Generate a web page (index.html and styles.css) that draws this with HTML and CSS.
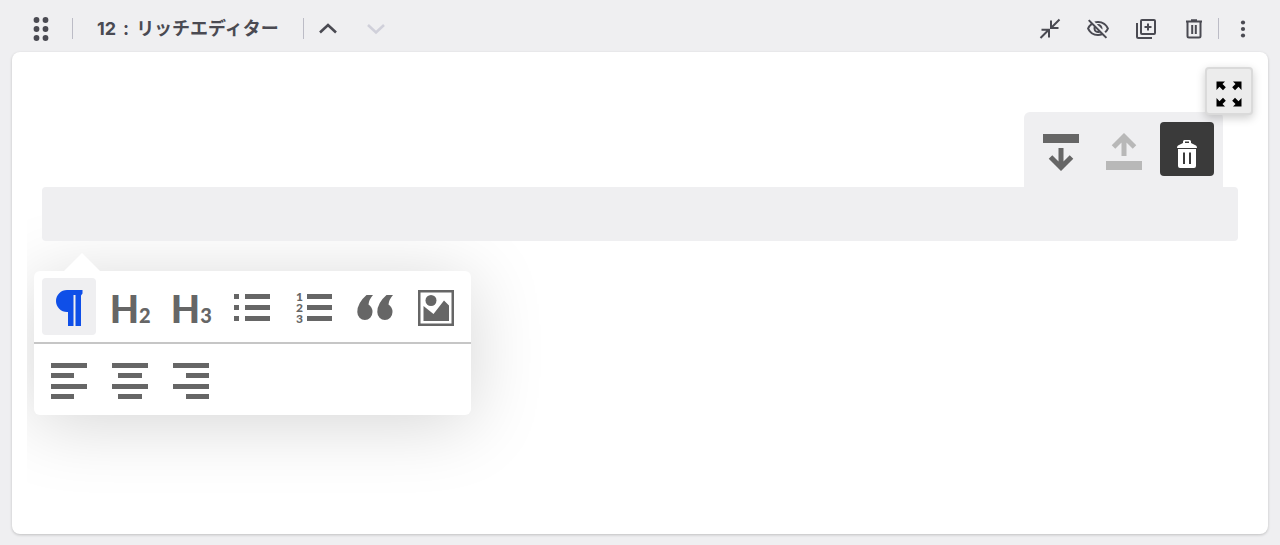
FILE: index.html
```html
<!DOCTYPE html>
<html lang="ja">
<head>
  <meta charset="UTF-8">
  <meta name="viewport" content="width=device-width, initial-scale=1">
  <title>リッチエディター</title>
  <link rel="stylesheet" href="styles.css">
</head>
<body>

  <header class="unit-header">
    <button class="icon-btn drag" type="button" aria-label="並び替え">
      <svg width="24" height="24" viewBox="0 0 24 24" fill="currentColor">
        <circle cx="7.500" cy="3" r="2.900"/><circle cx="16.500" cy="3" r="2.900"/>
        <circle cx="7.500" cy="12" r="2.900"/><circle cx="16.500" cy="12" r="2.900"/>
        <circle cx="7.500" cy="21" r="2.900"/><circle cx="16.500" cy="21" r="2.900"/>
      </svg>
    </button>
    <span class="divider"></span>
    <h1 class="unit-title"><span>12</span> <span>:</span> <span>リッチエディター</span></h1>
    <span class="divider"></span>
    <div class="move">
      <button class="icon-btn" type="button" aria-label="上へ">
        <svg width="24" height="24" viewBox="0 0 24 24" class="line chevron"><path d="M4 15.500 12 8l8 7.500"/></svg>
      </button>
      <button class="icon-btn" type="button" aria-label="下へ" disabled>
        <svg width="24" height="24" viewBox="0 0 24 24" class="line chevron"><path d="M4 8 12 15.500 20 8"/></svg>
      </button>
    </div>

    <div class="actions">
      <button class="icon-btn" type="button" aria-label="折りたたむ">
        <svg width="24" height="24" viewBox="0 0 24 24" class="line"><path d="M21.500 2.500 13.500 10.500M13 3.500V11h7.500M2.500 21 10.500 13M3.500 12.700H11V20.500"/></svg>
      </button>
      <button class="icon-btn" type="button" aria-label="非表示">
        <svg width="24" height="24" viewBox="0 0 24 24" fill="currentColor"><path d="M12 6a9.770 9.770 0 0 1 8.820 5.500 9.650 9.650 0 0 1-2.410 3.120l1.410 1.410A11.800 11.800 0 0 0 23 11.500C21.270 7.110 17 4 12 4c-1.270 0-2.490.2-3.640.57l1.650 1.650C10.660 6.090 11.320 6 12 6zm-1.070 1.140L13 9.210c.57.25 1.030.71 1.280 1.280l2.070 2.070c.08-.34.14-.7.14-1.070C16.500 9.010 14.480 7 12 7c-.37 0-.72.05-1.070.14zM2.010 3.870l2.680 2.680A11.740 11.740 0 0 0 1 11.500C2.730 15.890 7 19 12 19c1.520 0 2.980-.29 4.320-.82l3.420 3.420 1.410-1.410L3.420 2.450 2.010 3.870zm7.500 7.500 2.610 2.610c-.04.01-.08.02-.12.02a2.500 2.500 0 0 1-2.500-2.500c0-.05.01-.08.01-.13zm-3.400-3.400 1.750 1.750a4.600 4.600 0 0 0-.36 1.780 4.507 4.507 0 0 0 6.270 4.140l.98.98c-.88.24-1.800.38-2.750.38a9.770 9.770 0 0 1-8.820-5.500c.7-1.430 1.720-2.610 2.930-3.530z"/></svg>
      </button>
      <button class="icon-btn" type="button" aria-label="複製">
        <svg width="24" height="24" viewBox="0 0 24 24" class="line"><rect x="7" y="3" width="14" height="14" rx="1"/><path d="M3 6v13.500a1.500 1.500 0 0 0 1.500 1.500H18M14 6.500v7M10.500 10h7"/></svg>
      </button>
      <button class="icon-btn" type="button" aria-label="削除">
        <svg width="24" height="24" viewBox="0 0 24 24" class="line"><path d="M4 4.500h16M9 3.300h6M5.500 5v14a1.500 1.500 0 0 0 1.500 1.500h10a1.500 1.500 0 0 0 1.500-1.500V5M10.200 8v9M13.800 8v9"/></svg>
      </button>
      <span class="divider"></span>
      <button class="icon-btn" type="button" aria-label="メニュー">
        <svg width="24" height="24" viewBox="0 0 24 24" fill="currentColor"><circle cx="12" cy="5.500" r="2.100"/><circle cx="12" cy="12" r="2.100"/><circle cx="12" cy="18.500" r="2.100"/></svg>
      </button>
    </div>
  </header>

  <main class="card">
    <button class="fullscreen" type="button" aria-label="全画面">
      <svg width="26" height="26" viewBox="0 0 26 26" fill="currentColor">
        <path id="corner" d="M.5.5h8.500L6.500 3 9.800 6.300 7 9.200 3.500 5.800.5 9z"/>
        <use href="#corner" transform="matrix(-1 0 0 1 26 0)"/>
        <use href="#corner" transform="matrix(1 0 0 -1 0 26)"/>
        <use href="#corner" transform="matrix(-1 0 0 -1 26 26)"/>
      </svg>
    </button>

    <div class="editor">
      <div class="block-tools">
        <button class="tool" type="button" aria-label="下へ移動">
          <svg width="36" height="36" viewBox="0 0 36 36"><path d="M0 0h36v9H0z" fill="currentColor"/><path d="M18 14v20M7.500 23 18 33.500 28.500 23" class="arrow"/></svg>
        </button>
        <button class="tool" type="button" aria-label="上へ移動" disabled>
          <svg width="36" height="36" viewBox="0 0 36 36"><path d="M0 27h36v9H0z" fill="currentColor"/><path d="M18 22V2M7.500 13 18 2.500 28.500 13" class="arrow"/></svg>
        </button>
        <button class="tool tool-delete" type="button" aria-label="ブロックを削除">
          <svg width="20" height="28" viewBox="0 0 20 28"><path d="M6 3V1.500Q6 0 7.500 0h5Q14 0 14 1.500V3l5 2.500q1 .5 1 2.500H0q0-2 1-2.500zM8 1.500V3h4V1.500zM1 9h18V26q0 2-2 2H3q-2 0-2-2zM6 12.500V24h2V12.500zM12 12.500V24h2V12.500z" fill="currentColor" fill-rule="evenodd"/></svg>
        </button>
      </div>

      <div class="block">
        <input class="block-input" type="text" aria-label="本文">

        <div class="menu">
          <div class="menu-row">
            <button class="tool active" type="button" aria-label="段落">
              <svg width="28" height="36" viewBox="0 0 28 36" fill="currentColor"><path d="M12 0h15.500v3.500l-1.500 2V36h-5.500V5h-2v31H13V22h-1A11 11 0 0 1 12 0z"/></svg>
            </button>
            <button class="tool heading" type="button">H<span class="level">2</span></button>
            <button class="tool heading" type="button">H<span class="level">3</span></button>
            <button class="tool" type="button" aria-label="箇条書き">
              <svg width="36" height="36" viewBox="0 0 36 36" fill="currentColor"><path d="M0 4h5v5H0zM0 15h5v5H0zM0 26h5v5H0zM11 4h25v5H11zM11 15h25v5H11zM11 26h25v5H11z"/></svg>
            </button>
            <button class="tool" type="button" aria-label="番号付きリスト">
              <svg width="36" height="36" viewBox="0 0 36 36" fill="currentColor"><path d="M11 4h25v5H11zM11 15h25v5H11zM11 26h25v5H11z"/><text class="nums"><tspan x="0" y="11">1</tspan><tspan x="0" y="22">2</tspan><tspan x="0" y="33">3</tspan></text></svg>
            </button>
            <button class="tool" type="button" aria-label="引用">
              <svg width="36" height="36" viewBox="0 0 36 36" fill="currentColor"><path id="quote" d="M9.500 5H16Q12 9.500 11.500 14.500 15.500 17 15.500 22A7.600 8 0 0 1 .3 22Q.3 13 9.500 5z"/><use href="#quote" x="20"/></svg>
            </button>
            <button class="tool" type="button" aria-label="画像">
              <svg width="36" height="36" viewBox="0 0 36 36" fill="currentColor"><path d="M0 0h36v36H0zM2.500 2.500v31h31v-31z" fill-rule="evenodd"/><circle cx="13" cy="10.500" r="5.500"/><path d="M5.500 31V16l10 8L26 10.500l5 5V31z"/></svg>
            </button>
          </div>
          <div class="menu-row">
            <button class="tool" type="button" aria-label="左揃え">
              <svg width="36" height="36" viewBox="0 0 36 36" fill="currentColor"><path d="M0 0h36v5H0zM0 10h23v5H0zM0 21h36v5H0zM0 31h23v5H0z"/></svg>
            </button>
            <button class="tool" type="button" aria-label="中央揃え">
              <svg width="36" height="36" viewBox="0 0 36 36" fill="currentColor"><path d="M0 0h36v5H0zM6 10h24v5H6zM0 21h36v5H0zM6 31h24v5H6z"/></svg>
            </button>
            <button class="tool" type="button" aria-label="右揃え">
              <svg width="36" height="36" viewBox="0 0 36 36" fill="currentColor"><path d="M0 0h36v5H0zM13 10h23v5H13zM0 21h36v5H0zM13 31h23v5H13z"/></svg>
            </button>
          </div>
        </div>
      </div>
    </div>
  </main>

</body>
</html>
```
FILE: styles.css
```css
* {
  box-sizing: border-box;
}

body {
  margin: 0;
  min-height: 100vh;
  display: flex;
  flex-direction: column;
  background: #efeff1;
  color: #4a4a52;
  font-family: Inter, "Noto Sans CJK JP", sans-serif;
}

button {
  padding: 0;
  border: none;
  background: none;
  color: inherit;
  font-family: inherit;
  cursor: pointer;
}

svg {
  display: block;
  overflow: visible;
}

/* header */
.unit-header {
  display: flex;
  align-items: center;
  height: 52px;
  padding: 5px 25px 0 29px;
}

.icon-btn {
  width: 24px;
  height: 24px;
}

.icon-btn:disabled {
  color: #d0d0da;
}

.drag {
  margin-right: 19px;
}

.divider {
  width: 1px;
  height: 21px;
  background: #bcbcc6;
}

.unit-title {
  display: flex;
  gap: 7px;
  margin: 0;
  padding: 0 24px;
  font-size: 18px;
  line-height: 24px;
  font-weight: 700;
  white-space: nowrap;
}

.move {
  display: flex;
  gap: 24px;
  margin-left: 12px;
}

.actions {
  display: flex;
  align-items: center;
  gap: 24px;
  margin-left: auto;
}

.actions .divider {
  margin: 0 -12px;
}

.line {
  fill: none;
  stroke: currentColor;
  stroke-width: 2;
}

.chevron {
  stroke-width: 2.6;
}

/* card */
.card {
  position: relative;
  flex: 1;
  display: flex;
  margin: 0 12px 11px;
  background: #fff;
  border-radius: 8px;
  box-shadow: 0 1px 3px rgba(0, 0, 0, 0.2);
}

.fullscreen {
  position: absolute;
  top: 15px;
  right: 15px;
  z-index: 2;
  display: flex;
  align-items: center;
  justify-content: center;
  width: 48px;
  height: 48px;
  padding-top: 6px;
  background: #ececec;
  border: 2px solid #dadada;
  border-radius: 4px;
  color: #000;
  box-shadow: 0 3px 10px rgba(0, 0, 0, 0.2);
}

.editor {
  flex: 1;
  margin: 0 15px;
  padding: 60px 15px 0;
  overflow: hidden;
}

.block-tools {
  display: flex;
  gap: 9px;
  width: fit-content;
  margin: 0 15px 0 auto;
  padding: 10px 9px 11px 10px;
  background: #efeff1;
  border-radius: 6px 6px 0 0;
}

.tool {
  display: flex;
  align-items: center;
  justify-content: center;
  width: 54px;
  height: 54px;
  padding-top: 6px;
  border-radius: 4px;
  color: #666;
}

.tool:disabled {
  color: #b8b8b8;
}

.tool-delete {
  padding-top: 10px;
  background: #3a3a3a;
  color: #fff;
}

.arrow {
  fill: none;
  stroke: currentColor;
  stroke-width: 5;
}

.block {
  position: relative;
}

.block-input {
  position: relative;
  z-index: 1;
  display: block;
  width: 100%;
  height: 54px;
  padding: 0 12px;
  border: none;
  border-radius: 4px;
  background: #efeff1;
  font-size: 18px;
}

/* popup menu under the block */
.menu {
  position: absolute;
  top: 84px;
  left: -8px;
  width: 437px;
  background: #fff;
  border-radius: 6px;
  box-shadow: 0 8px 72px rgba(0, 0, 0, 0.17);
}

.menu::before {
  content: "";
  position: absolute;
  top: -18px;
  left: 30px;
  border: 18px solid transparent;
  border-top: none;
  border-bottom-color: #fff;
}

.menu-row {
  display: grid;
  grid-template-columns: repeat(7, 54px);
  justify-content: space-between;
  padding: 7px 8px;
}

.menu-row + .menu-row {
  border-top: 2px solid #c6c6c6;
}

.menu .tool {
  height: 57px;
  padding-top: 3px;
}

.menu .active {
  background: #efeff1;
  color: #0f4fe8;
}

.menu .heading {
  align-items: baseline;
  font-family: Lato, sans-serif;
  font-size: 38px;
  line-height: 54px;
  font-weight: 900;
}

.level {
  font-size: 20px;
}

.nums {
  font-family: Lato, sans-serif;
  font-size: 12px;
  font-weight: 900;
}
```
